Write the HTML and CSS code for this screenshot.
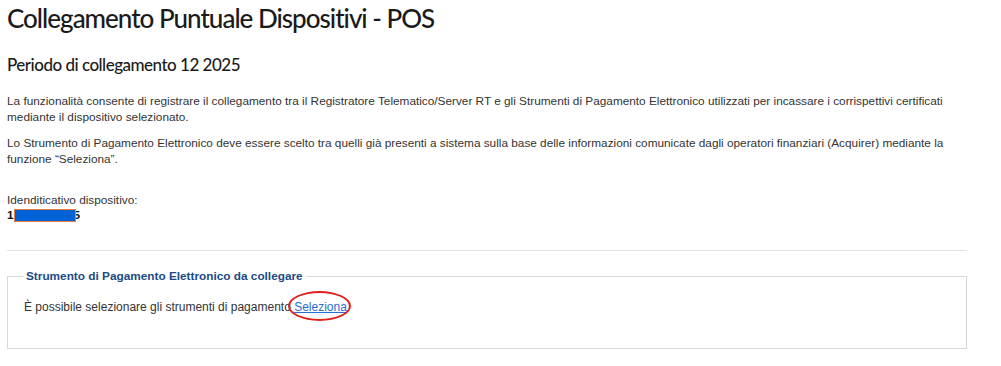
FILE: index.html
```html
<!DOCTYPE html>
<html lang="it">
<head>
<meta charset="utf-8">
<link rel="stylesheet" href="styles.css">
</head>
<body>
<main class="page">
  <h1 class="title">Collegamento Puntuale Dispositivi - POS</h1>
  <h2 class="subtitle">Periodo di collegamento 12 2025</h2>
  <p class="text">La funzionalità consente di registrare il collegamento tra il Registratore Telematico/Server RT e gli Strumenti di Pagamento Elettronico utilizzati per incassare i corrispettivi certificati mediante il dispositivo selezionato.</p>
  <p class="text">Lo Strumento di Pagamento Elettronico deve essere scelto tra quelli già presenti a sistema sulla base delle informazioni comunicate dagli operatori finanziari (Acquirer) mediante la funzione “Seleziona”.</p>
  <div class="device">
    <div class="device-label">Idenditicativo dispositivo:</div>
    <div class="device-id">1<span class="redact"></span>5</div>
  </div>
  <hr class="sep">
  <fieldset class="box">
    <legend class="legend">Strumento di Pagamento Elettronico da collegare</legend>
    <p class="box-text">È possibile selezionare gli strumenti di pagamento <a class="link" href="#">Seleziona<span class="ring"></span></a></p>
  </fieldset>
</main>
</body>
</html>
```
FILE: styles.css
```css
* { box-sizing: border-box; }
html, body { margin: 0; padding: 0; background: #fff; }
.page {
  width: 967px;
  padding: 0 0 0 7px;
  font-family: "Liberation Sans", Arial, sans-serif;
  color: #333;
}
.title {
  font-family: Lato, "Open Sans", sans-serif;
  font-weight: 500;
  font-size: 26px;
  line-height: 30px;
  margin: 3px 0 0;
  color: #1a1a1a;
  letter-spacing: -1px;
}
.subtitle {
  font-family: Lato, "Open Sans", sans-serif;
  font-weight: 500;
  font-size: 17px;
  line-height: 22px;
  margin: 21px 0 0;
  color: #1a1a1a;
  letter-spacing: -0.5px;
}
.text {
  font-size: 11.8px;
  line-height: 16px;
  margin: 17px 0 0;
}
.text + .text { margin-top: 10px; }
.device { margin-top: 26px; font-size: 11.8px; line-height: 15px; }
.device-id { font-weight: bold; color: #111; display: flex; align-items: center; }
.redact {
  display: inline-block;
  width: 62px;
  height: 13px;
  background: #0062d4;
  border: 1px solid #f07a3a;
  margin: 0 -2px 0 0;
  position: relative;
  z-index: 1;
}
.sep {
  border: 0;
  border-top: 1px solid #e2e2e2;
  margin: 27px 0 0;
}
.box {
  margin: 18px 0 0;
  border: 1px solid #d9d9d9;
  padding: 0 16px 0 16px;
  height: 80px;
}
.legend {
  font-size: 11.8px;
  font-weight: bold;
  color: #1b4a85;
  padding: 0 3px;
  margin-left: -1px;
}
.box-text { font-size: 12px; line-height: 15px; margin: 17px 0 0; }
.link { color: #2a6fd0; text-decoration: underline; position: relative; }
.ring {
  position: absolute;
  left: -6px;
  top: -9px;
  width: 63px;
  height: 30px;
  border: 2px solid #e0201a;
  border-radius: 50%;
}
```
